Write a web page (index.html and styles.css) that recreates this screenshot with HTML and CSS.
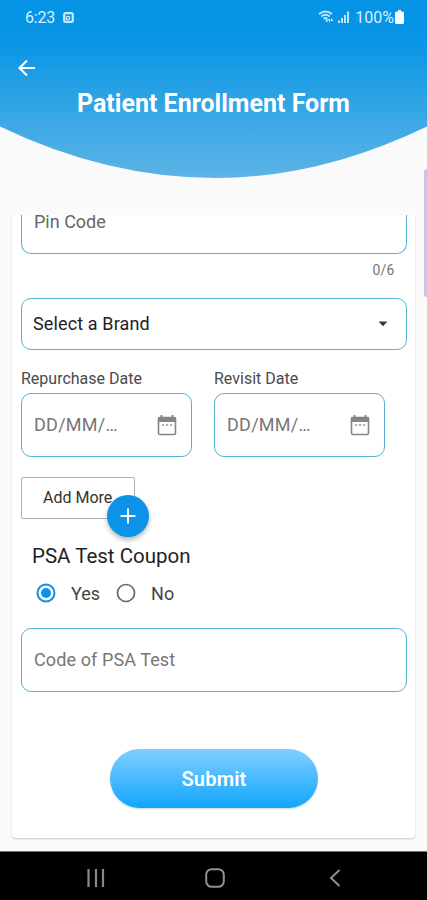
FILE: index.html
```html
<!DOCTYPE html>
<html lang="en">
<head>
<meta charset="utf-8">
<title>Patient Enrollment Form</title>
<link rel="stylesheet" href="styles.css">
</head>
<body>
<div class="screen">
  <header class="header">
    <svg class="header-bg" width="427" height="179" viewBox="0 0 427 179">
      <defs>
        <linearGradient id="sky" x1="0" y1="0" x2="0" y2="1">
          <stop offset="0" stop-color="#0593e5"/>
          <stop offset=".22" stop-color="#0895e6"/>
          <stop offset=".68" stop-color="#3ba8e4"/>
          <stop offset="1" stop-color="#5db3e6"/>
        </linearGradient>
      </defs>
      <path d="M0 0H427V126.500Q320 178 216 178Q107 178 0 126.500Z" fill="url(#sky)"/>
    </svg>
    <div class="status">
      <span class="time">6:23</span>
      <svg class="shot" width="11" height="11" viewBox="0 0 11 11"><rect x="1.200" y="1.200" width="8.600" height="8.600" rx="1.500" fill="none" stroke="#c9edff" stroke-width="2.200"/><circle cx="5" cy="6" r="1.700" fill="none" stroke="#c9edff" stroke-width="1.300"/></svg>
      <span class="spacer"></span>
      <svg class="wifi" width="17" height="14" viewBox="0 0 17 14"><g fill="none" stroke="#b9e6fb" stroke-width="1.900"><path d="M1 4Q7.500-1 14 4"/><path d="M3.300 6.500Q7.500 3.200 11.700 6.500"/><path d="M5.500 8.800Q7.500 7.300 9.300 8.800"/></g><path d="M7 9.500L9 12.500L10 9.500ZM10 9h2v4zM13 8l2.500 3h-2.500z" fill="#d5f2ff"/></svg>
      <svg class="signal" width="12" height="14" viewBox="0 0 12 14"><g fill="#b9e6fb"><rect x="0" y="10.500" width="2" height="2.500"/><rect x="3" y="8" width="2" height="5"/><rect x="6" y="5" width="2" height="8"/><rect x="9" y="1.500" width="2" height="11.500"/></g></svg>
      <span class="percent">100%</span>
      <svg class="battery" width="9" height="14" viewBox="0 0 9 14"><path d="M3 0H6V1.500H7.500Q9 1.500 9 3V12.500Q9 14 7.500 14H1.500Q0 14 0 12.500V3Q0 1.500 1.500 1.500H3Z" fill="#f4fcff"/></svg>
    </div>
    <svg class="back" width="19" height="18" viewBox="0 0 19 18"><path d="M18 9H2.200M10 1.500L2.500 9L10 16.500" fill="none" stroke="#fff" stroke-width="2.100"/></svg>
    <h1 class="title">Patient Enrollment Form</h1>
  </header>

  <span class="edge-handle"></span>

  <main class="card">
    <div class="field pin"><span>Pin Code</span></div>
    <div class="counter">0/6</div>
    <div class="field brand">
      <span>Select a Brand</span>
      <svg width="10" height="6" viewBox="0 0 10 6"><path d="M.5 .5H9.500L5 5.200Z" fill="#383838"/></svg>
    </div>
    <div class="dates">
      <div class="date-col">
        <label class="label">Repurchase Date</label>
        <div class="field date"><span>DD/MM/…</span>
          <svg width="20" height="22" viewBox="0 0 20 22"><rect x="1.500" y="3.500" width="17" height="17" rx="1.500" fill="none" stroke="#858585" stroke-width="1.600"/><path d="M1 3H19V8H1Z" fill="#858585"/><path d="M4.500 1V4M15.500 1V4" stroke="#858585" stroke-width="2"/><path d="M5 11h2.200M9 11h2.200M13 11h2.200" stroke="#9a9a9a" stroke-width="1.700"/></svg>
        </div>
      </div>
      <div class="date-col">
        <label class="label">Revisit Date</label>
        <div class="field date"><span>DD/MM/…</span>
          <svg width="20" height="22" viewBox="0 0 20 22"><rect x="1.500" y="3.500" width="17" height="17" rx="1.500" fill="none" stroke="#858585" stroke-width="1.600"/><path d="M1 3H19V8H1Z" fill="#858585"/><path d="M4.500 1V4M15.500 1V4" stroke="#858585" stroke-width="2"/><path d="M5 11h2.200M9 11h2.200M13 11h2.200" stroke="#9a9a9a" stroke-width="1.700"/></svg>
        </div>
      </div>
    </div>
    <div class="add-more"><span>Add More</span>
      <span class="fab"><svg width="16" height="16" viewBox="0 0 16 16"><path d="M8 .5V15.500M.5 8H15.500" stroke="#fff" stroke-width="2"/></svg></span>
    </div>
    <h2 class="coupon">PSA Test Coupon</h2>
    <div class="radios">
      <svg width="20" height="20" viewBox="0 0 20 20"><circle cx="10" cy="10" r="8.500" fill="none" stroke="#0d92e6" stroke-width="2"/><circle cx="10" cy="10" r="5" fill="#0d92e6"/></svg>
      <span class="yes">Yes</span>
      <svg width="20" height="20" viewBox="0 0 20 20"><circle cx="10" cy="10" r="8.500" fill="none" stroke="#666" stroke-width="1.700"/></svg>
      <span class="no">No</span>
    </div>
    <div class="field code"><span>Code of PSA Test</span></div>
    <div class="submit">Submit</div>
  </main>

  <nav class="nav">
    <svg width="18" height="18" viewBox="0 0 18 18"><path d="M1.500 0V18M9 0V18M16 0V18" stroke="#898989" stroke-width="2.200"/></svg>
    <svg width="20" height="20" viewBox="0 0 20 20"><rect x="1.200" y="1.200" width="17.600" height="17.600" rx="5.500" fill="none" stroke="#919191" stroke-width="2"/></svg>
    <svg class="nav-back" width="12" height="18" viewBox="0 0 12 18"><path d="M10.500 1L2 9L10.500 17" fill="none" stroke="#919191" stroke-width="1.900"/></svg>
  </nav>
</div>
</body>
</html>
```
FILE: styles.css
```css
* { box-sizing: border-box; }
body { margin: 0; font-family: Roboto, "Liberation Sans", sans-serif; background: #fafafa; }
svg { display: block; flex: none; }
span { white-space: nowrap; }
.screen { position: relative; width: 427px; height: 900px; overflow: hidden; display: flex; flex-direction: column; background: #fafafa; }

.header { position: relative; height: 215px; flex: none; }
.header-bg { position: absolute; left: 0; top: 0; }
.status { position: relative; display: flex; align-items: center; height: 34px; padding: 0 23px 0 25px; color: #d5f1ff; font-size: 16px; }
.time { letter-spacing: -.2px; }
.shot { margin-left: 8px; }
.spacer { flex: 1; }
.signal { margin-left: 3px; }
.percent { margin-left: 5px; font-size: 16px; }
.battery { margin-left: 1px; }
.back { position: relative; margin: 25px 0 0 17px; }
.title { position: relative; margin: 12px 0 0; text-align: center; font-size: 25px; line-height: 30px; font-weight: 700; color: #fff; }

.edge-handle { position: absolute; right: 0; top: 169px; width: 3px; height: 128px; border-radius: 3px 0 0 3px; background: #d5bfe6; }

.card { width: 403px; height: 623px; flex: none; margin-left: 12px; padding: 0 8.500px 0 9px; background: #fff; border-radius: 0 0 4px 4px; box-shadow: 0 1px 2px rgba(0,0,0,.2); clip-path: inset(0 -4px -5px -4px); }
.field { display: flex; align-items: center; border: 1px solid #55b2d2; border-radius: 10px; }
.pin { height: 39px; border-top: 0; border-radius: 0 0 10px 10px; padding: 0 12px 25px; font-size: 18px; color: #666; }
.counter { height: 44px; padding: 7px 12px 0 0; text-align: right; font-size: 14px; line-height: 18px; letter-spacing: .2px; color: #777; }
.brand { height: 52px; padding: 0 18px 1px 11px; justify-content: space-between; font-size: 18px; letter-spacing: .13px; color: #222; }
.dates { display: flex; gap: 22px; margin-top: 19px; }
.date-col { width: 171px; }
.label { display: block; height: 24px; line-height: 20px; font-size: 16px; color: #4a4a4a; white-space: nowrap; }
.date { height: 64px; padding: 0 14px 1px 12px; justify-content: space-between; font-size: 18px; letter-spacing: .25px; color: #777; }
.add-more { position: relative; width: 114px; height: 42px; margin-top: 20px; padding: 0 0 2px 21px; display: flex; align-items: center; border: 1px solid #b0b0b0; border-radius: 2px; font-size: 16px; color: #333; }
.fab { position: absolute; left: 84.500px; top: 17px; width: 42px; height: 42px; border-radius: 50%; background: #0c92e7; display: flex; align-items: center; justify-content: center; box-shadow: 0 3px 5px rgba(0,0,0,.28); }
.coupon { margin: 23px 0 0 11px; font-size: 20.500px; line-height: 28px; font-weight: 400; color: #222; }
.radios { display: flex; align-items: center; height: 24px; margin: 11px 0 0 15px; font-size: 18px; color: #444; }
.yes { margin: 0 16px 0 15px; }
.no { margin-left: 15px; }
.code { height: 64px; margin-top: 23px; padding: 0 12px 1px; font-size: 18px; letter-spacing: .1px; color: #777; }
.submit { width: 208px; height: 59px; margin: 57px 0 0 89px; border-radius: 30px; display: flex; align-items: center; justify-content: center; background: linear-gradient(#80cfff, #12a5fc); box-shadow: 0 1px 2px rgba(0,60,100,.2); font-size: 20px; letter-spacing: .2px; font-weight: 600; color: #fff; }

.nav { margin-top: auto; height: 49px; flex: none; padding: 3px 86px 0 87px; display: flex; align-items: center; gap: 100px; background: #000; border-top: 1px solid #777; }
.nav-back { margin-left: 4px; }
```
